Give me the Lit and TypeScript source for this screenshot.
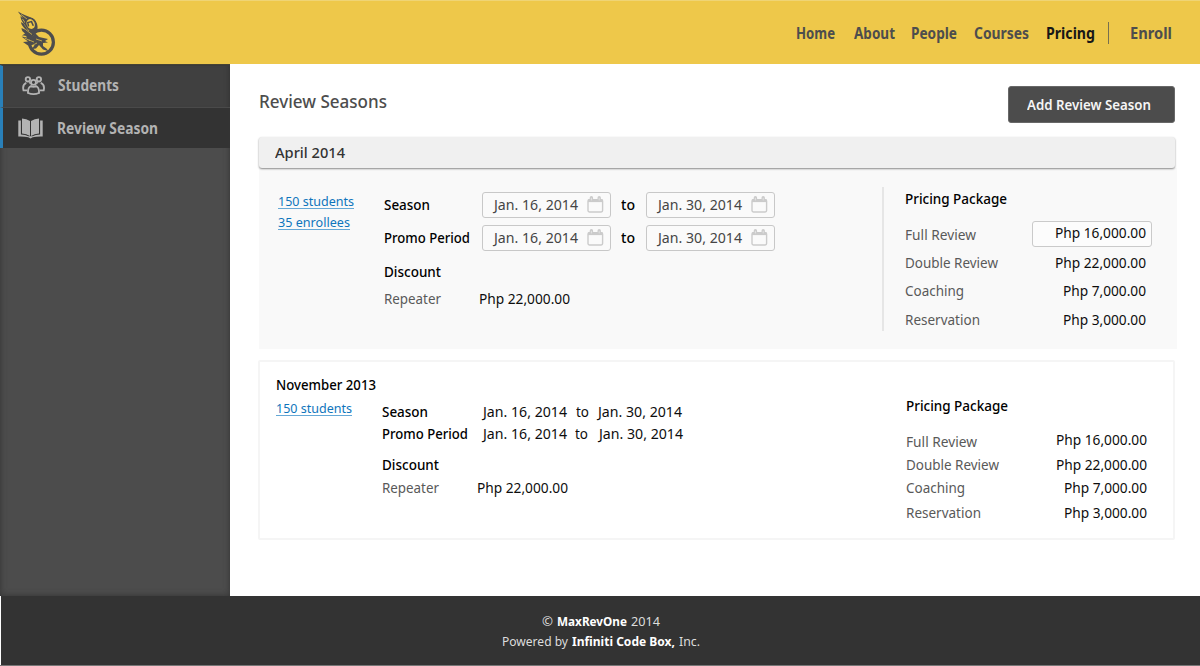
import { LitElement, html, css, svg } from "lit";
import { customElement, property } from "lit/decorators.js";

/** A single line of text, condensed horizontally to a given measure. */
@customElement("fit-text")
class FitText extends LitElement {
  @property({ type: Number }) w = 0;
  @property() text = "";
  static styles = css`
    :host { display: inline-block; height: 20px; line-height: 20px; white-space: nowrap; vertical-align: top; flex: none; }
    .ink { display: inline-block; transform-origin: 0 0; }
  `;
  render() {
    return html`<span class="ink">${this.text}</span>`;
  }
  updated() {
    const ink = this.renderRoot.querySelector(".ink") as HTMLElement;
    ink.style.transform = "none";
    const natural = ink.getBoundingClientRect().width;
    this.style.width = `${this.w}px`;
    if (natural) ink.style.transform = `scaleX(${this.w / natural})`;
  }
}

const t = (text: string, w: number, cls = "") =>
  html`<fit-text class=${cls} .text=${text} .w=${w}></fit-text>`;

const calendar = svg`
  <svg class="cal" width="17" height="17" viewBox="0 0 17 17" fill="none" stroke="#cbcbcb">
    <rect x="1" y="3.6" width="14.6" height="12.4" rx="1.4" stroke-width="1.4"/>
    <path d="M1 4.700H15.6" stroke-width="2.800"/>
    <path d="M4.4 1.8V4M12.2 1.8V4" stroke-width="3.4" stroke-linecap="round"/>
    <path d="M4.4 2.200V4M12.2 2.200V4" stroke="#e4e4e4" stroke-width=".9" stroke-linecap="round"/>
  </svg>`;

const logo = svg`
  <svg class="logo" width="40" height="48" viewBox="0 0 40 48" fill="none" stroke="#4d4d4d">
    <circle cx="24.4" cy="31.200" r="12" stroke-width="3.200"/>
    <path fill="#4d4d4d" stroke="none" d="M1 .5C6 4 12 5.500 16 7.500C20 10 21 15 20.500 18L23 20L18 22L13 28C11 25 8 24 5 24.500L8 22.500C6 21 4.500 19.500 4.500 17L9 19C6 16 4 13.500 4 11L7 13C4.500 10 3.500 7 3.500 5L6 7.500C4 4 2 2.500 1 .5Z"/>
    <path stroke="#eec84a" stroke-width=".7" d="M4 3.500L10 8M5.500 8L9 13M7.500 13.500L12 20M8.500 18.500L15 23.500"/>
    <ellipse cx="13.700" cy="13" rx="4.800" ry="5.900" transform="rotate(-25 13.700 13)" fill="#eec84a" stroke-width="1.600"/>
    <path d="M11.500 15.500L10.800 11.600L14.500 10.600L16.300 14.800" stroke-width="1.600"/>
    <path fill="#4d4d4d" stroke="none" d="M4.500 25.500L10 26.500L8 23L15 26L18 22L22 26L31 28L28 30L31 31.500L26 32L26 35L30 38L31 40L26 38.500L22 34L19 37.500L15 38L17.500 34L11 34.500L6 31L11 30.500Z"/>
    <path stroke="#eec84a" stroke-width=".7" d="M12 29L17 31M19 28L25 30M15 34.500L20 32M7.500 27L13 29.500"/>
  </svg>`;

const people = svg`
  <svg width="24" height="20" viewBox="0 0 24 20" fill="none" stroke="#b3b3b3" stroke-width="1.850">
    <circle cx="5.900" cy="3.300" r="2.200"/><circle cx="16.900" cy="3.300" r="2.200"/>
    <path d="M5.200 14.300H1.500C.7 11 1.300 8 4.300 6.800M17.800 14.300H21.700C22.500 11 21.700 8 18.700 6.800"/>
    <circle cx="11.500" cy="6.300" r="2.500"/>
    <path d="M9 10C6.700 11 5.800 13.200 6 17Q11.500 19.200 17 17C17.200 13.200 16.300 11 14 10Q11.500 11.800 9 10Z"/>
    <path d="M7.300 6.200L8.600 8M15.700 6.200L14.400 8" stroke-width="1.300"/>
  </svg>`;

const book = svg`
  <svg width="25" height="21" viewBox="0 0 25 21" fill="#b3b3b3">
    <path d="M4 .4Q8.500 .7 12 3V18Q8.500 15.900 4 15.500ZM21 .4Q16.500 .7 13 3V18Q16.500 15.900 21 15.500Z"/>
    <path d="M.3 2.500H2.900V16.500Q7.500 16.700 10.500 18.200H14.500Q17.500 16.700 22.100 16.500V2.500H24.700V18.500Q18.500 18.300 14.700 19.300L12.500 20.400L10.300 19.300Q6.500 18.300.3 18.500Z"/>
  </svg>`;

interface Price { name: string; nameW: number; value: string; valueW: number; }
const prices: Price[] = [
  { name: "Full Review", nameW: 71, value: "Php 16,000.00", valueW: 91 },
  { name: "Double Review", nameW: 93, value: "Php 22,000.00", valueW: 91 },
  { name: "Coaching", nameW: 59, value: "Php 7,000.00", valueW: 83 },
  { name: "Reservation", nameW: 75, value: "Php 3,000.00", valueW: 83 },
];

@customElement("app-root")
class AppRoot extends LitElement {
  static styles = css`
    * { box-sizing: border-box; }
    :host { display: flex; flex-direction: column; width: 1200px; height: 666px; overflow: hidden; background: #fff;
      font: 400 14px/20px "Noto Sans", "Open Sans", sans-serif; color: #0d0d0d; }
    header { height: 64px; flex: none; background: #eec84a; border-top: 1px solid #efd475; display: flex; padding: 10px 28px 0 17px; }
    .logo { display: block; flex: none; }
    nav { margin-left: auto; display: flex; padding-top: 13px; font-size: 15.4px; font-weight: 700; color: #4d4d4d; }
    nav .about { margin-left: 19px; }
    nav .people { margin-left: 16px; }
    nav .gap { margin-left: 17px; }
    nav .on { color: #171717; }
    nav .bar { width: 1px; height: 22px; margin: -2px 21px 0 13px; background: #77704f; }
    .mid { display: flex; height: 532px; flex: none; }
    aside { width: 230px; flex: none; background: #4c4c4c; box-shadow: inset 0 0 6px #333; border-top: 1px solid #464333; }
    .item { display: flex; font-weight: 700; font-size: 15.200px; color: #b3b3b3; border-left: 3px solid #2980b9; }
    .students { height: 42px; background: #404040; border-top: 1px solid #3a3a3a; padding: 10px 0 0 19px; gap: 12px; box-shadow: inset -5px 0 5px -4px #333; }
    .students fit-text { margin-top: -1px; }
    .review { height: 41px; background: #333; border-top: 1px solid #4a4a4a; padding: 10px 0 0 15px; gap: 14px; }
    main { flex: 1; min-width: 0; padding: 22px 24px 0 28px; }
    .head { display: flex; justify-content: space-between; height: 51px; padding-right: 1px; }
    .title { font-size: 17.200px; font-weight: 500; color: #4d4d4d; margin: 6px 0 0 1px; }
    .btn { width: 167px; height: 37px; background: #4c4c4c; border: 1px solid #686868; border-radius: 3px; color: #f5f5f5; font: 600 14.600px "Noto Sans", sans-serif; padding: 0 0 2px 18px; text-align: left; display: flex; align-items: center; }
    .band { position: relative; height: 31px; margin: 0 1px 0 1px; border-radius: 3px; background: #f0f0f0; box-shadow: 0 1px 2px #888; padding: 5px 0 0 16px; font-weight: 500; font-size: 14.500px; color: #333; }
    .open { height: 181px; margin: 0 -1px 0 1px; background: #f9f9f9; display: flex; }
    .links { display: flex; flex-direction: column; gap: 4px; color: #0f75bc; font-size: 13px; }
    .link { height: 17px; border-bottom: 1px solid #65a8d6; align-self: flex-start; }
    .link fit-text { margin-top: -1px; }
    .open .links { width: 125px; padding: 24px 0 0 19px; }
    .closed { height: 180px; margin: 11px 1px 0 0; border: 2px solid #f5f5f5; border-radius: 2px; display: flex; }
    .b { font-weight: 500; color: #000; }
    .dim { color: #595959; }
    .info { flex: none; }
    .line { display: flex; }
    .open .info { width: 498px; padding-top: 23px; }
    .open .line { height: 33px; }
    .cell { width: 98px; flex: none; padding-top: 4px; }
    .field { width: 129px; height: 26px; margin-top: 1px; border: 1px solid #c8c8c8; border-radius: 3px; background: #fafafa; padding: 2px 6px 0 11px; display: flex; justify-content: space-between; color: #454545; flex: none; }
    .cal { display: block; margin-top: 1px; }
    .open .line .to { margin: 4px 11px 0 10px; }
    .open .discount { margin-top: 5px; height: 27px; }
    .rep { display: flex; }
    .rep .k { width: 95px; }
    .rule { width: 2px; height: 144px; margin: 19px 21px 0 0; background: #e6e6e6; flex: none; }
    .pricing { display: flex; flex-direction: column; }
    .open .pricing { width: 247px; padding-top: 21px; }
    .prices { display: grid; grid-template-columns: 1fr auto; }
    .open .prices { grid-template-rows: 28px 28px 29px 20px; margin-top: 16px; padding-right: 6px; }
    .val { text-align: right; }
    .amount { display: block; width: 120px; height: 26px; margin: -4px -6px 0 0; padding: 1px 5px 0 0; border: 1px solid #cacaca; border-radius: 3px; background: #fcfcfc; }
    .closed .left { width: 121px; padding: 13px 0 0 16px; }
    .closed .link { margin-top: 4px; display: inline-block; color: #0f75bc; font-size: 13px; border-color: #65a8d6; }
    .closed .info { width: 525px; padding: 40px 0 0 1px; }
    .closed .line { height: 22px; }
    .closed .cell { width: 101px; padding: 0; }
    .closed .to { margin: 0 9px; }
    .closed .promo .to { margin: 0 11px 0 8px; }
    .closed .discount { height: 23px; margin-top: 9px; }
    .closed .pricing { width: 241px; padding-top: 34px; }
    .closed .prices { grid-template-rows: 23px 23px 25px 20px; margin-top: 16px; }
    .closed .first { margin-top: -2px; }
    footer { height: 69px; flex: none; margin-left: 1px; background: #333; padding: 15px 0 0 501px; color: #ddd; font-size: 12.800px; display: flex; flex-direction: column; }
    footer .strong { font-weight: 700; color: #fff; }
    footer div { display: flex; gap: 4px; height: 20px; }
    footer .copy { padding-left: 40px; }
    .edge { height: 1px; background: #777; }
  `;

  private pricing(editable: boolean) {
    return html`<section class="pricing">
      <div>${t("Pricing Package", 102, "b")}</div>
      <div class="prices">
        ${prices.map((p, i) => html`
          <span class="dim">${t(p.name, p.nameW)}</span>
          <span class="val ${i === 0 ? "first" : ""}">${i === 0 && editable
            ? html`<span class="amount">${t(p.value, p.valueW)}</span>`
            : t(p.value, p.valueW)}</span>`)}
      </div>
    </section>`;
  }

  private field(text: string) {
    return html`<span class="field">${t(text, 84)}${calendar}</span>`;
  }

  private openLine(label: string, w: number) {
    return html`<div class="line">
      <span class="cell">${t(label, w, "b")}</span>
      ${this.field("Jan. 16, 2014")}${t("to", 14, "b to")}${this.field("Jan. 30, 2014")}
    </div>`;
  }

  private discount() {
    return html`<div class="discount">${t("Discount", 57, "b")}</div>
      <div class="rep"><span class="k dim">${t("Repeater", 57)}</span>${t("Php 22,000.00", 91)}</div>`;
  }

  render() {
    return html`
      <header>
        ${logo}
        <nav>
          ${t("Home", 39)}${t("About", 41, "about")}${t("People", 46, "people")}${t("Courses", 55, "gap")}${t("Pricing", 49, "gap on")}
          <span class="bar"></span>${t("Enroll", 42)}
        </nav>
      </header>
      <div class="mid">
        <aside>
          <div class="item students">${people}${t("Students", 61)}</div>
          <div class="item review">${book}${t("Review Season", 101)}</div>
        </aside>
        <main>
          <div class="head">
            ${t("Review Seasons", 128, "title")}
            <button class="btn">${t("Add Review Season", 124)}</button>
          </div>
          <div class="band">${t("April 2014", 70)}</div>
          <section class="open">
            <div class="links">
              <a class="link">${t("150 students", 76)}</a>
              <a class="link">${t("35 enrollees", 72)}</a>
            </div>
            <div class="info">
              ${this.openLine("Season", 46)}${this.openLine("Promo Period", 86)}
              ${this.discount()}
            </div>
            <div class="rule"></div>
            ${this.pricing(true)}
          </section>
          <section class="closed">
            <div class="left">
              ${t("November 2013", 100, "b")}
              <a class="link">${t("150 students", 76)}</a>
            </div>
            <div class="info">
              <div class="line"><span class="cell">${t("Season", 46, "b")}</span>${t("Jan. 16, 2014", 84)}${t("to", 13, "to")}${t("Jan. 30, 2014", 84)}</div>
              <div class="line promo"><span class="cell">${t("Promo Period", 86, "b")}</span>${t("Jan. 16, 2014", 84)}${t("to", 13, "to")}${t("Jan. 30, 2014", 84)}</div>
              ${this.discount()}
            </div>
            ${this.pricing(false)}
          </section>
        </main>
      </div>
      <footer>
        <div class="copy">${t("©", 11)}${t("MaxRevOne", 70, "strong")}${t("2014", 29)}</div>
        <div>${t("Powered by", 66)}${t("Infiniti Code Box,", 103, "strong")}${t("Inc.", 21)}</div>
      </footer>
      <div class="edge"></div>`;
  }
}
